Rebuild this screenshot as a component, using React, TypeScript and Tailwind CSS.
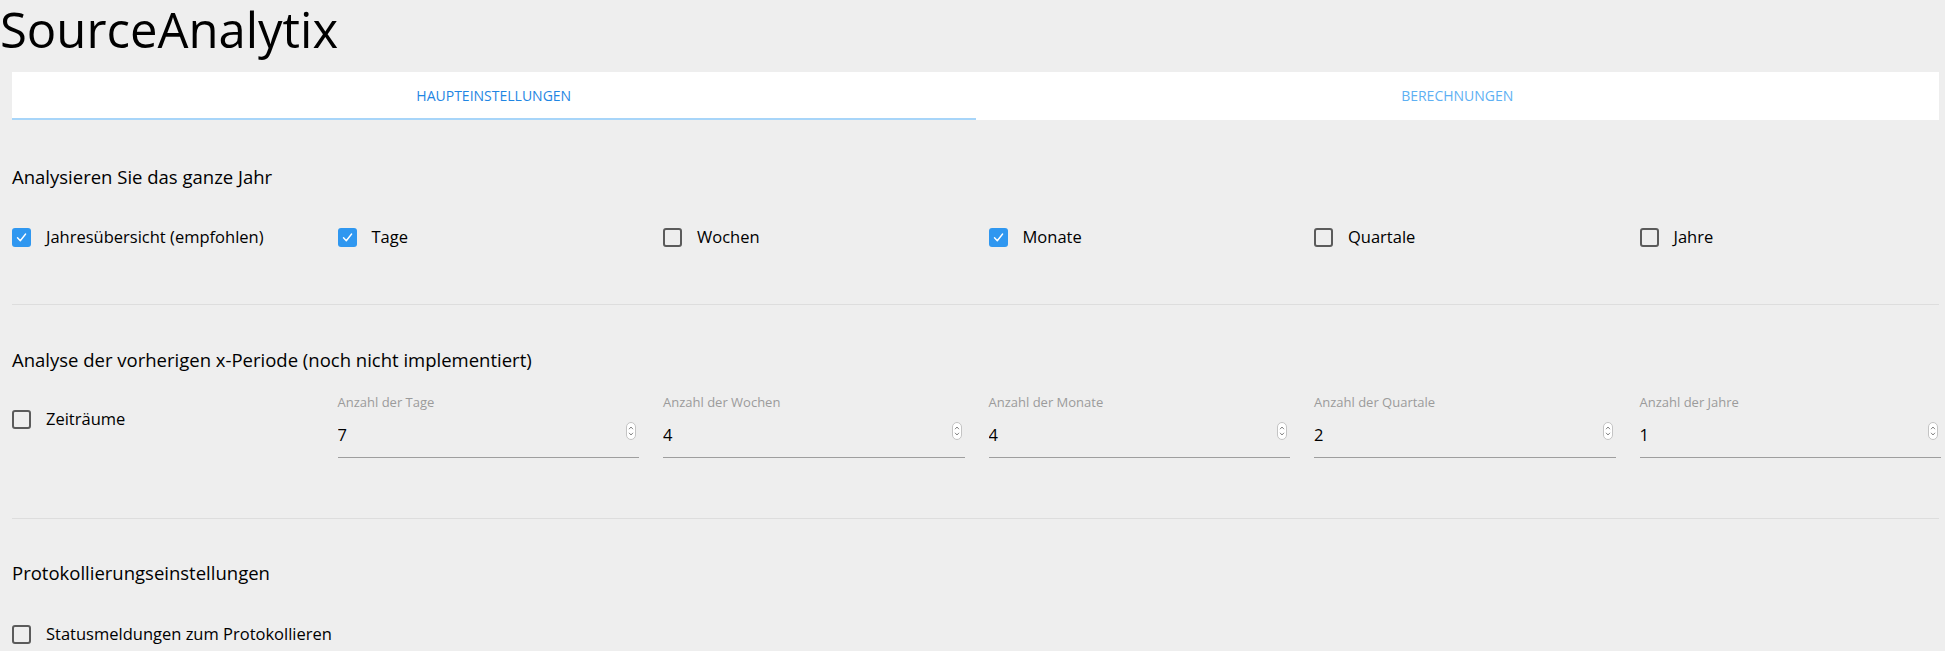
import { useState } from "react";

type Box = { label: string; checked: boolean };

const yearBoxes: Box[] = [
  { label: "Jahresübersicht (empfohlen)", checked: true },
  { label: "Tage", checked: true },
  { label: "Wochen", checked: false },
  { label: "Monate", checked: true },
  { label: "Quartale", checked: false },
  { label: "Jahre", checked: false },
];

const periodFields = [
  { label: "Anzahl der Tage", value: "7" },
  { label: "Anzahl der Wochen", value: "4" },
  { label: "Anzahl der Monate", value: "4" },
  { label: "Anzahl der Quartale", value: "2" },
  { label: "Anzahl der Jahre", value: "1" },
];

function Checkbox({ label, checked }: Box) {
  const [on, setOn] = useState(checked);
  return (
    <label className="flex items-center h-6 gap-[15px] cursor-pointer select-none" onClick={() => setOn(!on)}>
      {on ? (
        <span className="w-[19px] h-[19px] rounded-[3px] bg-[#2f97f0] flex items-center justify-center shrink-0">
          <svg width="13" height="13" viewBox="0 0 13 13" fill="none">
            <path d="M2.5 6.8 L5.3 9.8 L10.6 3" stroke="white" strokeWidth="1.4" strokeLinecap="round" strokeLinejoin="round" />
          </svg>
        </span>
      ) : (
        <span className="w-[19px] h-[19px] rounded-[3px] border-2 border-[#5b5b5b] shrink-0" />
      )}
      <span className="text-[16.5px] text-black whitespace-nowrap">{label}</span>
    </label>
  );
}

function Spinner() {
  return (
    <span className="absolute right-[3px] top-[12px] w-[10px] h-[18px] rounded-full border border-[#c4c4c4] bg-white flex flex-col items-center justify-center gap-[2px]">
      <svg width="6" height="4" viewBox="0 0 6 4" fill="none">
        <path d="M1 3.2 L3 1 L5 3.2" stroke="#777" strokeWidth="0.9" />
      </svg>
      <svg width="6" height="4" viewBox="0 0 6 4" fill="none">
        <path d="M1 0.8 L3 3 L5 0.8" stroke="#777" strokeWidth="0.9" />
      </svg>
    </span>
  );
}

function NumberField({ label, value }: { label: string; value: string }) {
  return (
    <div className="flex flex-col">
      <div className="text-[13px] leading-4 text-[#9b9b9b] whitespace-nowrap">{label}</div>
      <div className="relative h-[48px] border-b border-[#9e9e9e]">
        <input
          readOnly
          value={value}
          className="w-full h-full bg-transparent outline-none text-[16.5px] text-black pt-[1px]"
        />
        <Spinner />
      </div>
    </div>
  );
}

export default function App() {
  const [tab, setTab] = useState(0);

  return (
    <div className="min-h-screen bg-[#eeeeee] font-['Open_Sans',sans-serif] text-black">
      {/* Title */}
      <div className="h-[72px] pt-[2px]">
        <h1 className="text-[49px] leading-[54px]">SourceAnalytix</h1>
      </div>

      <div className="pl-3 pr-1">
        {/* Tabs */}
        <div className="flex h-12 bg-white mr-[2px]">
          {["Haupteinstellungen", "Berechnungen"].map((t, i) => (
            <button
              key={t}
              onClick={() => setTab(i)}
              className={`flex-1 flex items-center justify-center uppercase text-[14px] border-b-2 ${
                tab === i ? "border-[#a7d5f9] text-[#1f86e3]" : "border-transparent text-[#5eb0f3]"
              }`}
            >
              {t}
            </button>
          ))}
        </div>

        {/* Section 1 */}
        <h2 className="mt-[45px] text-[18.5px] leading-6">Analysieren Sie das ganze Jahr</h2>
        <div className="mt-9 grid grid-cols-6 gap-6">
          {yearBoxes.map((b) => (
            <Checkbox key={b.label} {...b} />
          ))}
        </div>

        <div className="mt-[55px] h-px bg-[#dddddd] mr-[2px]" />

        {/* Section 2 */}
        <h2 className="mt-[43px] text-[18.5px] leading-6">Analyse der vorherigen x-Periode (noch nicht implementiert)</h2>
        <div className="mt-[22px] grid grid-cols-6 gap-6 items-start">
          <div className="mt-[13px]">
            <Checkbox label="Zeiträume" checked={false} />
          </div>
          {periodFields.map((f) => (
            <NumberField key={f.label} {...f} />
          ))}
        </div>

        <div className="mt-[60px] h-px bg-[#dddddd] mr-[2px]" />

        {/* Section 3 */}
        <h2 className="mt-[42px] text-[18.5px] leading-6">Protokollierungseinstellungen</h2>
        <div className="mt-[37px] pb-6">
          <Checkbox label="Statusmeldungen zum Protokollieren" checked={false} />
        </div>
      </div>
    </div>
  );
}
